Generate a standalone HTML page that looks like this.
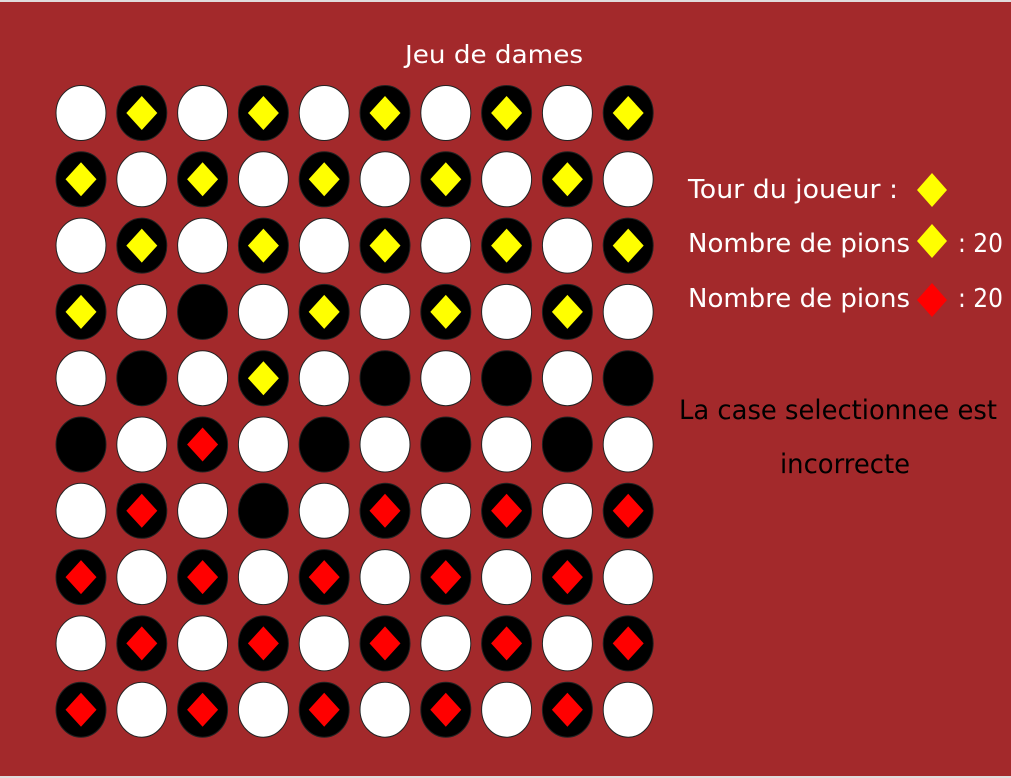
<!DOCTYPE html>
<html><head><meta charset="utf-8"><style>
html,body{margin:0;padding:0;width:1011px;height:778px;overflow:hidden;background:#a3292b}
svg{display:block}
text{font-family:"DejaVu Sans","Liberation Sans",sans-serif}
</style></head><body>
<svg id="s" width="1011" height="778" xmlns="http://www.w3.org/2000/svg">
<rect x="0" y="0" width="1011" height="778" fill="#a3292b"/>
<rect x="0" y="0" width="1011" height="2" fill="#e0dcdc"/>
<rect x="0" y="776" width="1011" height="2" fill="#e0dcdc"/>
<g id="board"></g>
<text x="405" y="63" font-size="25" fill="#fff" textLength="178" lengthAdjust="spacingAndGlyphs">Jeu de dames</text>
<text x="688" y="198" font-size="26" fill="#fff" textLength="210" lengthAdjust="spacingAndGlyphs">Tour du joueur :</text>
<polygon points="932,173 947,190 932,207 917,190" fill="#ffff00"/>
<text x="688" y="252" font-size="26" fill="#fff" textLength="222" lengthAdjust="spacingAndGlyphs">Nombre de pions</text>
<polygon points="932,224 947,241 932,258 917,241" fill="#ffff00"/>
<text x="958" y="252" font-size="26" fill="#fff" textLength="45" lengthAdjust="spacingAndGlyphs">: 20</text>
<text x="688" y="307" font-size="26" fill="#fff" textLength="222" lengthAdjust="spacingAndGlyphs">Nombre de pions</text>
<polygon points="932,283 947,300 932,317 917,300" fill="#ff0000"/>
<text x="958" y="307" font-size="26" fill="#fff" textLength="45" lengthAdjust="spacingAndGlyphs">: 20</text>
<text x="679" y="419" font-size="27" fill="#000" textLength="318" lengthAdjust="spacingAndGlyphs">La case selectionnee est</text>
<text x="780" y="473" font-size="27" fill="#000" textLength="130" lengthAdjust="spacingAndGlyphs">incorrecte</text>
</svg>
<script>
var b=["WYWYWYWYWY","YWYWYWYWYW","WYWYWYWYWY","YWBWYWYWYW","WBWYWBWBWB","BWRWBWBWBW","WRWBWRWRWR","RWRWRWRWRW","WRWRWRWRWR","RWRWRWRWRW"];
var g=document.getElementById('board'),h='';
for(var r=0;r<10;r++)for(var c=0;c<10;c++){
var x=81+c*60.8,y=113+r*66.3,t=b[r][c];
var f=t=='W'?'#fff':'#000';
h+='<ellipse cx="'+x+'" cy="'+y+'" rx="25" ry="27.5" fill="'+f+'" stroke="#222" stroke-width="1"/>';
if(t=='Y'||t=='R'){var col=t=='Y'?'#ffff00':'#ff0000';
h+='<polygon points="'+x+','+(y-17)+' '+(x+15.5)+','+y+' '+x+','+(y+17)+' '+(x-15.5)+','+y+'" fill="'+col+'"/>';}
}
g.innerHTML=h;
</script>
</body></html>
